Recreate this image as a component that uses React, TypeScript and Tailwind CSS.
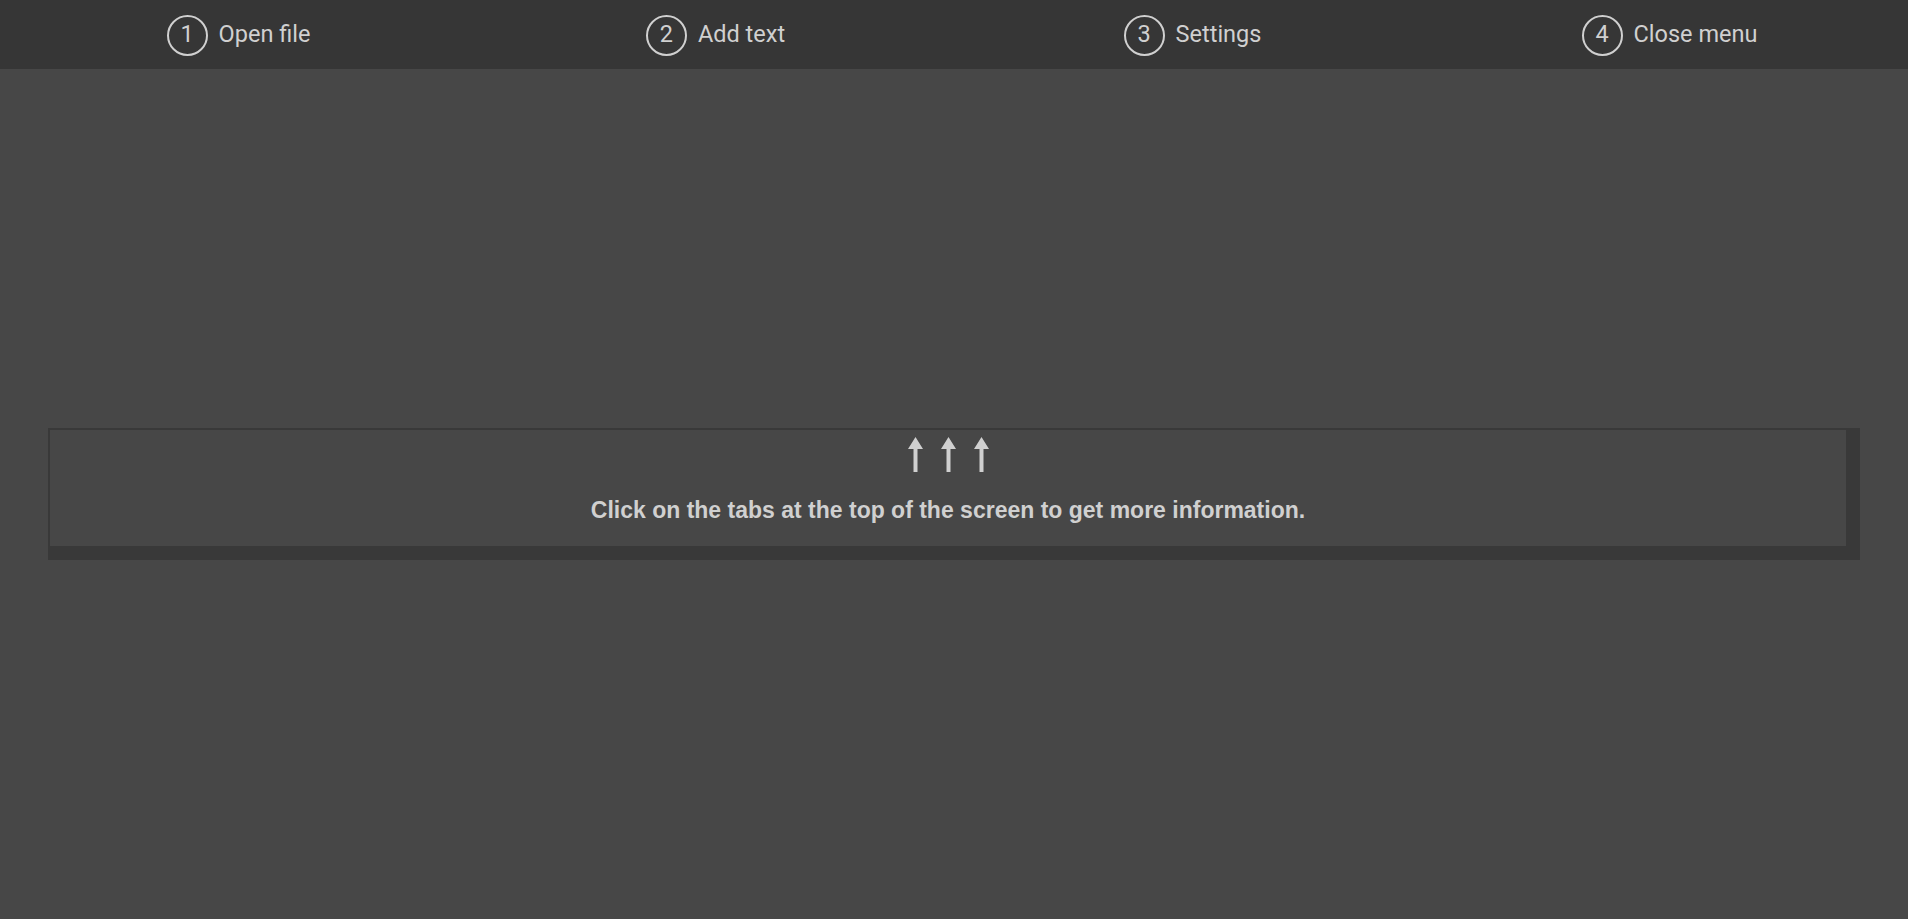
const tabs = ['Open file', 'Add text', 'Settings', 'Close menu']

const Arrow = () => (
    <svg width="15" height="35" viewBox="0 0 15 35" fill="#d0d0d0">
        <path d="M7.5 0 L15 12 L9.5 12 L9.5 35 L5.5 35 L5.5 12 L0 12 Z" />
    </svg>
)

export default function App() {
    return (
        <div className="min-h-screen w-full bg-[#474747] font-['Roboto',sans-serif] text-[#d0d0d0]">
            <div className="flex h-[69px] w-full bg-[#363636]">
                {tabs.map((t, i) => (
                    <div key={t} className="flex flex-1 items-center justify-center gap-[11px] pt-[1px]">
                        <div className="flex h-[41px] w-[41px] items-center justify-center rounded-full border-2 border-[#d0d0d0] text-[23.5px] leading-none">
                            {i + 1}
                        </div>
                        <span className="text-[23.5px] leading-none">{t}</span>
                    </div>
                ))}
            </div>
            <div className="px-[48px] pt-[359px]">
                <div className="flex h-[132px] flex-col items-center border-t-2 border-l-2 border-r-[14px] border-b-[14px] border-[#393939]">
                    <div className="mt-[7px] flex gap-[18px]">
                        <Arrow />
                        <Arrow />
                        <Arrow />
                    </div>
                    <p className="mt-[27px] font-['Liberation_Sans',Arial,sans-serif] text-[23px] font-bold leading-none">
                        Click on the tabs at the top of the screen to get more information.
                    </p>
                </div>
            </div>
        </div>
    )
}
